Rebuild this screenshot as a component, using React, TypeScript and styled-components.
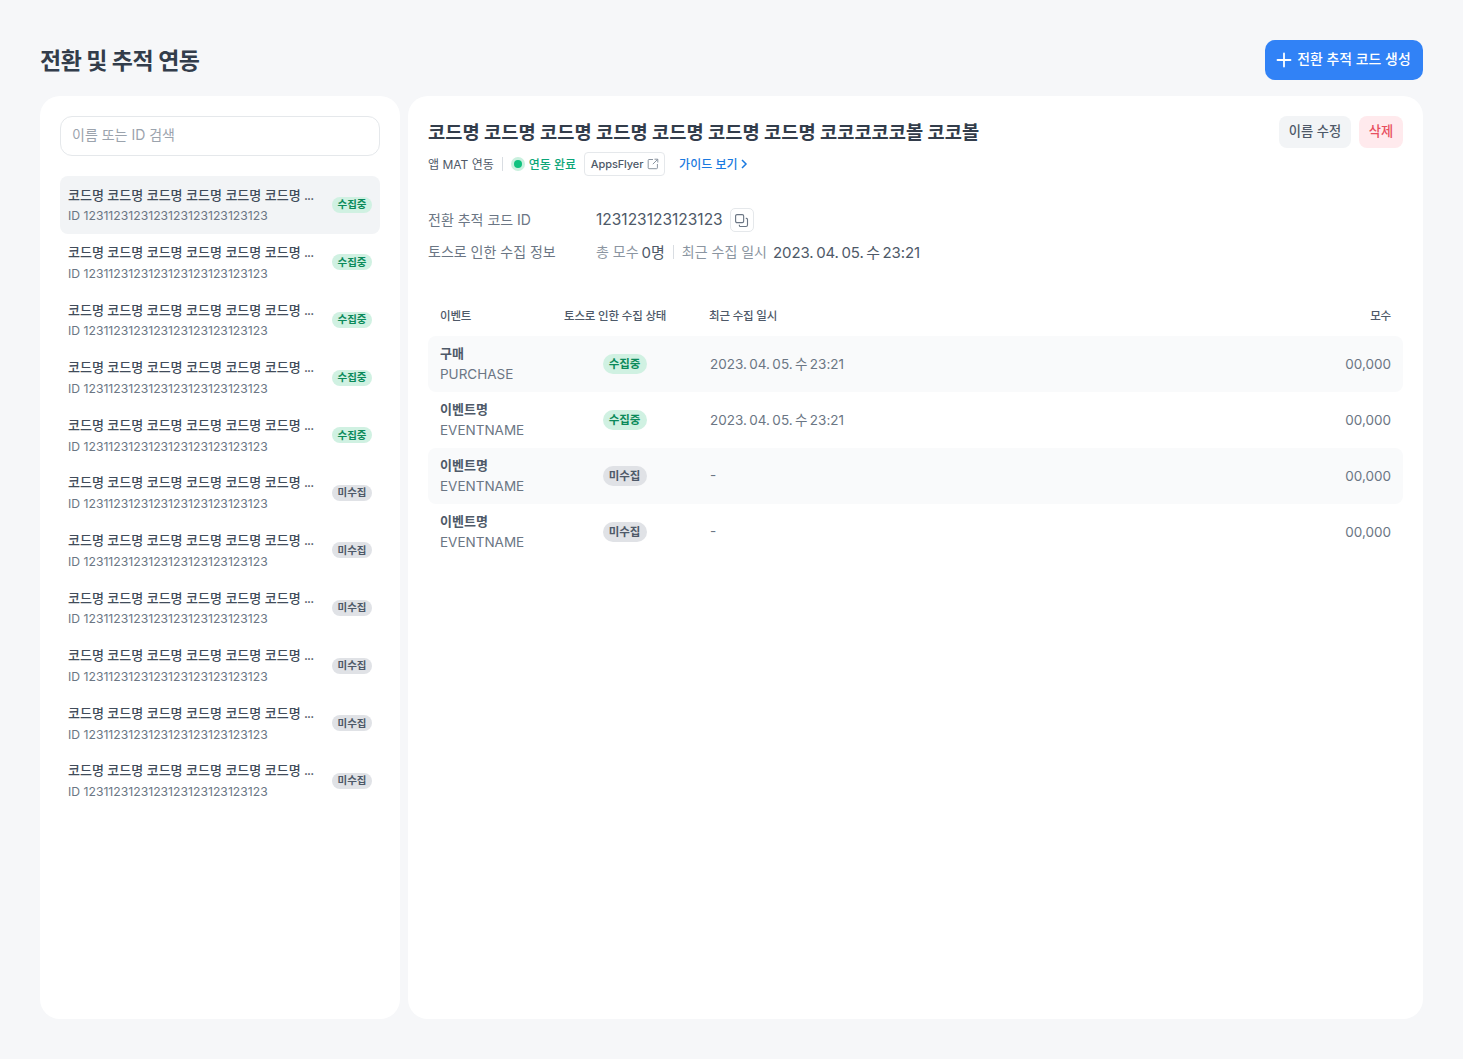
import React from "react";
import styled, { createGlobalStyle } from "styled-components";

const Global = createGlobalStyle`
  html, body { margin: 0; padding: 0; background: #f6f7f9; }
  body { font-family: Inter, "Noto Sans CJK KR", sans-serif; color: #333d4b; }
  * { box-sizing: border-box; }
`;

const Page = styled.div`
  width: 1463px;
  height: 1059px;
  padding: 40px;
  display: flex;
  flex-direction: column;
  gap: 16px;
`;
const Header = styled.header`
  display: flex;
  justify-content: space-between;
  align-items: center;
  height: 40px;
`;
const PageTitle = styled.h1`
  margin: 0 0 3px;
  font-size: 23px;
  font-weight: 700;
  color: #333d4b;
  letter-spacing: -0.5px;
`;
const CreateButton = styled.button`
  height: 40px;
  width: 158px;
  border: 0;
  border-radius: 10px;
  background: #3182f6;
  color: #fff;
  font: 500 13.9px Inter, "Noto Sans CJK KR", sans-serif;
  display: flex;
  align-items: center;
  justify-content: center;
  gap: 5px;
  padding: 0 1px 1px 0;
`;
const CreateLabel = styled.span`
  margin-bottom: 3px;
`;
const Columns = styled.main`
  flex: 1;
  display: flex;
  gap: 8px;
  min-height: 0;
`;
const Sidebar = styled.aside`
  width: 360px;
  background: #fff;
  border-radius: 20px;
  padding: 20px;
  display: flex;
  flex-direction: column;
  gap: 20px;
`;
const Search = styled.input`
  height: 40px;
  width: 100%;
  flex: none;
  border: 1px solid #e5e8eb;
  border-radius: 12px;
  padding: 0 11px 3px;
  font: 400 14px Inter, "Noto Sans CJK KR", sans-serif;
  outline: 0;
  background: #fff;
  &::placeholder { color: #9ba3ad; opacity: 1; }
`;
const List = styled.div`
  display: flex;
  flex-direction: column;
`;
const Item = styled.div<{ $active?: boolean }>`
  height: 57.6px;
  padding: 8px;
  border-radius: 8px;
  background: ${(p) => (p.$active ? "#f2f4f6" : "transparent")};
  display: flex;
  align-items: center;
  justify-content: space-between;
`;
const ItemText = styled.div`
  width: 250px;
  min-width: 0;
  align-self: flex-start;
  padding-top: 0.5px;
`;
const ItemName = styled.div`
  font-size: 13px;
  line-height: 20.8px;
  font-weight: 500;
  color: #414c5a;
  white-space: nowrap;
`;
const Ellipsis = styled.span`
  letter-spacing: -0.9px;
`;
const ItemId = styled.div`
  margin-top: 1px;
  font-size: 12.2px;
  line-height: 20.8px;
  color: #6b7684;
  white-space: nowrap;
`;
const Badge = styled.span<{ $on?: boolean; $big?: boolean }>`
  display: inline-flex;
  align-items: center;
  justify-content: center;
  width: ${(p) => (p.$big ? "44px" : "40px")};
  height: ${(p) => (p.$big ? "20px" : "16px")};
  padding-bottom: 2px;
  border-radius: 10px;
  font-size: ${(p) => (p.$big ? "11.5px" : "10.5px")};
  font-weight: 700;
  background: ${(p) => (p.$on ? "#d0f1e2" : "#e0e2e6")};
  color: ${(p) => (p.$on ? "#0b8a5a" : "#4e5968")};
`;
const Detail = styled.section`
  flex: 1;
  background: #fff;
  border-radius: 20px;
  padding: 20px;
  display: flex;
  flex-direction: column;
`;
const TitleRow = styled.div`
  display: flex;
  justify-content: space-between;
  align-items: center;
  height: 32px;
`;
const DetailTitle = styled.h2`
  margin: 0 0 4px;
  font-size: 18.7px;
  font-weight: 700;
  color: #333d4b;
`;
const Actions = styled.div`
  display: flex;
  gap: 8px;
`;
const ActionButton = styled.button<{ $danger?: boolean }>`
  height: 32px;
  width: ${(p) => (p.$danger ? "44px" : "72px")};
  padding: 0 0 3px;
  border: 0;
  border-radius: 8px;
  font: 500 13.25px Inter, "Noto Sans CJK KR", sans-serif;
  background: ${(p) => (p.$danger ? "#ffeaed" : "#f2f4f6")};
  color: ${(p) => (p.$danger ? "#e8505f" : "#4e5968")};
`;
const MetaRow = styled.div`
  display: flex;
  align-items: center;
  height: 24px;
  margin-top: 4px;
  font-size: 12px;
  color: #4e5968;
`;
const MetaText = styled.span`
  margin-bottom: 1px;
`;
const Divider = styled.span`
  width: 1px;
  height: 14px;
  background: #d9dde2;
  margin: 0 8px;
`;
const Status = styled.span`
  display: inline-flex;
  align-items: center;
  gap: 4px;
  color: #0ca678;
  font-weight: 500;
`;
const StatusDot = styled.span`
  width: 8px;
  height: 8px;
  border-radius: 50%;
  background: #0fc27f;
  box-shadow: 0 0 0 3px #c9f0de;
  margin: 0 3px;
`;
const VendorTag = styled.span`
  margin-left: 8px;
  height: 24px;
  width: 81px;
  border: 1px solid #e5e8eb;
  border-radius: 4px;
  display: inline-flex;
  align-items: center;
  justify-content: center;
  gap: 4px;
  padding-left: 1px;
  font-size: 11px;
  font-weight: 500;
  letter-spacing: -0.1px;
  color: #4e5968;
`;
const GuideLink = styled.a`
  margin-left: 14px;
  display: inline-flex;
  align-items: center;
  gap: 2px;
  color: #1b7ae0;
  font-weight: 500;
`;
const InfoBlock = styled.div`
  margin-top: 32px;
  display: flex;
  flex-direction: column;
  gap: 8px;
`;
const InfoRow = styled.div`
  display: flex;
  align-items: center;
  height: 24px;
`;
const InfoLabel = styled.div`
  width: 168px;
  font-size: 14px;
  color: #6b7684;
  margin-bottom: 2px;
`;
const InfoValue = styled.span`
  font-size: 15.5px;
  color: #4e5968;
  margin-bottom: 2px;
`;
const InfoCount = styled(InfoValue)`
  font-size: 15px;
  margin-left: -3px;
`;
const InfoDate = styled(InfoValue)`
  font-size: 15px;
  word-spacing: -1.5px;
  letter-spacing: -0.1px;
`;
const InfoMuted = styled.span`
  font-size: 14px;
  color: #8b95a1;
  margin: 0 6px 2px 0;
`;
const CopyButton = styled.span`
  width: 24px;
  height: 24px;
  margin-left: 7px;
  border: 1px solid #e5e8eb;
  border-radius: 5px;
  display: inline-flex;
  align-items: center;
  justify-content: center;
`;
const Table = styled.div`
  margin-top: 32px;
  display: flex;
  flex-direction: column;
`;
const gridCols = "124px 145px 1fr 120px";
const HeadRow = styled.div`
  display: grid;
  grid-template-columns: ${gridCols};
  align-items: center;
  height: 40px;
  padding: 0 12px 2px;
  font-size: 11.5px;
  font-weight: 500;
  letter-spacing: -0.18px;
  color: #4e5968;
`;
const HeadCount = styled.div`
  text-align: right;
`;
const Row = styled.div<{ $shade?: boolean }>`
  display: grid;
  grid-template-columns: ${gridCols};
  align-items: center;
  height: 56px;
  padding: 0 12px;
  border-radius: 8px;
  background: ${(p) => (p.$shade ? "#f9fafb" : "transparent")};
`;
const EventName = styled.div`
  margin: -1px 0 1px;
  font-size: 13px;
  line-height: 20px;
  font-weight: 700;
  color: #4e5968;
`;
const EventCode = styled.div`
  font-size: 13.5px;
  line-height: 20px;
  color: #6b7684;
`;
const StatusCell = styled.div`
  display: flex;
  justify-content: center;
  padding-right: 24px;
`;
const DateCell = styled.div`
  font-size: 13.5px;
  word-spacing: -1.4px;
  color: #6b7684;
  padding: 0 0 2px 1px;
`;
const CountCell = styled.div`
  text-align: right;
  font-size: 13.5px;
  color: #6b7684;
`;

const PlusIcon = () => (
  <svg width="16" height="16" viewBox="0 0 16 16" fill="none" stroke="#fff" strokeWidth="1.8" strokeLinecap="round">
    <path d="M8 1.5v13M1.5 8h13" />
  </svg>
);
const ExternalIcon = () => (
  <svg width="12" height="12" viewBox="0 0 12 12" fill="none" stroke="#8b95a1" strokeWidth="1">
    <path d="M6 1.5H2a.8.8 0 0 0-.8.8v7.6c0 .5.3.8.8.8h7.6c.5 0 .8-.3.8-.8V6M7.5 1.2h3.3v3.3M10.6 1.4 5.8 6.2" />
  </svg>
);
const ChevronIcon = () => (
  <svg width="8" height="10" viewBox="0 0 8 10" fill="none" stroke="#1b7ae0" strokeWidth="1.5">
    <path d="M2 1l4 4-4 4" />
  </svg>
);
const CopyIcon = () => (
  <svg width="15" height="15" viewBox="0 0 14 14" fill="none" stroke="#6b7684" strokeWidth="1.05">
    <rect x="1.5" y="1.5" width="7.5" height="7.5" rx="1.3" />
    <path d="M11 5h.6c.6 0 1 .4 1 1v5.2c0 .8-.6 1.4-1.4 1.4H6c-.6 0-1-.4-1-1V11" />
  </svg>
);

const names = Array.from({ length: 11 }, (_, i) => i);
const events = [
  { name: "구매", code: "PURCHASE", on: true, date: "2023. 04. 05. 수 23:21" },
  { name: "이벤트명", code: "EVENTNAME", on: true, date: "2023. 04. 05. 수 23:21" },
  { name: "이벤트명", code: "EVENTNAME", on: false, date: "-" },
  { name: "이벤트명", code: "EVENTNAME", on: false, date: "-" },
];

export default function App() {
  return (
    <Page>
      <Global />
      <Header>
        <PageTitle>전환 및 추적 연동</PageTitle>
        <CreateButton>
          <PlusIcon />
          <CreateLabel>전환 추적 코드 생성</CreateLabel>
        </CreateButton>
      </Header>
      <Columns>
        <Sidebar>
          <Search placeholder="이름 또는 ID 검색" />
          <List>
            {names.map((i) => (
              <Item key={i} $active={i === 0}>
                <ItemText>
                  <ItemName>
                    코드명 코드명 코드명 코드명 코드명 코드명 <Ellipsis>...</Ellipsis>
                  </ItemName>
                  <ItemId>ID 1231123123123123123123123123</ItemId>
                </ItemText>
                <Badge $on={i < 5}>{i < 5 ? "수집중" : "미수집"}</Badge>
              </Item>
            ))}
          </List>
        </Sidebar>
        <Detail>
          <TitleRow>
            <DetailTitle>코드명 코드명 코드명 코드명 코드명 코드명 코드명 코코코코코볼 코코볼</DetailTitle>
            <Actions>
              <ActionButton>이름 수정</ActionButton>
              <ActionButton $danger>삭제</ActionButton>
            </Actions>
          </TitleRow>
          <MetaRow>
            <MetaText>앱 MAT 연동</MetaText>
            <Divider />
            <Status>
              <StatusDot />
              <MetaText>연동 완료</MetaText>
            </Status>
            <VendorTag>
              <MetaText>AppsFlyer</MetaText>
              <ExternalIcon />
            </VendorTag>
            <GuideLink>
              <MetaText>가이드 보기</MetaText>
              <ChevronIcon />
            </GuideLink>
          </MetaRow>
          <InfoBlock>
            <InfoRow>
              <InfoLabel>전환 추적 코드 ID</InfoLabel>
              <InfoValue>123123123123123</InfoValue>
              <CopyButton>
                <CopyIcon />
              </CopyButton>
            </InfoRow>
            <InfoRow>
              <InfoLabel>토스로 인한 수집 정보</InfoLabel>
              <InfoMuted>총 모수</InfoMuted>
              <InfoCount>0명</InfoCount>
              <Divider />
              <InfoMuted>최근 수집 일시</InfoMuted>
              <InfoDate>2023. 04. 05. 수 23:21</InfoDate>
            </InfoRow>
          </InfoBlock>
          <Table>
            <HeadRow>
              <div>이벤트</div>
              <div>토스로 인한 수집 상태</div>
              <div>최근 수집 일시</div>
              <HeadCount>모수</HeadCount>
            </HeadRow>
            {events.map((e, i) => (
              <Row key={i} $shade={i % 2 === 0}>
                <div>
                  <EventName>{e.name}</EventName>
                  <EventCode>{e.code}</EventCode>
                </div>
                <StatusCell>
                  <Badge $big $on={e.on}>{e.on ? "수집중" : "미수집"}</Badge>
                </StatusCell>
                <DateCell>{e.date}</DateCell>
                <CountCell>00,000</CountCell>
              </Row>
            ))}
          </Table>
        </Detail>
      </Columns>
    </Page>
  );
}
